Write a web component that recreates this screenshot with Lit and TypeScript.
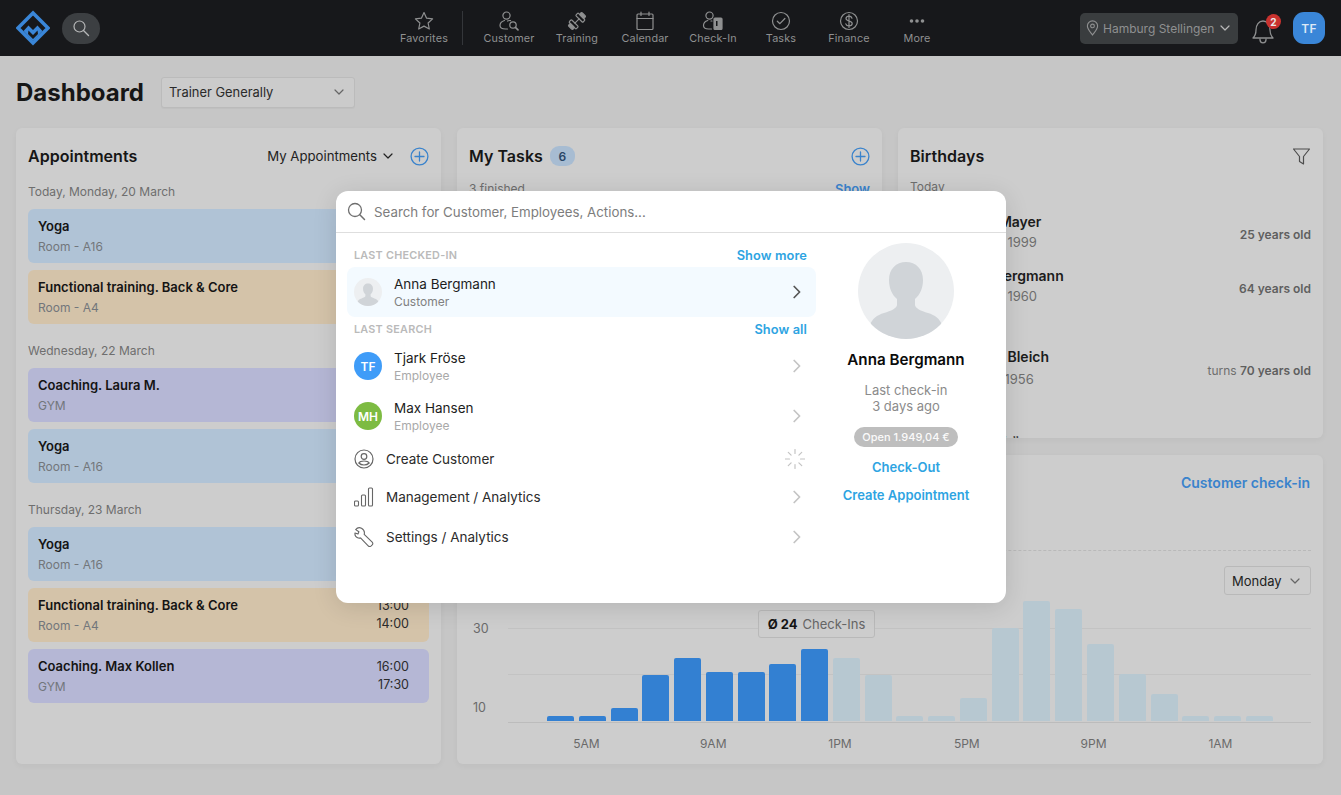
import { LitElement, html, css, svg } from "lit";
import { customElement } from "lit/decorators.js";

const chev = html`<svg class="chev" width="8" height="14" viewBox="0 0 8 14"><path d="M1.2 1.500 6.600 7l-5.400 5.500" fill="none" stroke="currentColor" stroke-width="1.700" stroke-linecap="round" stroke-linejoin="round"/></svg>`;
const down = html`<svg class="dchev" width="10" height="6" viewBox="0 0 10 6"><path d="M1 1l4 4 4-4" fill="none" stroke="currentColor" stroke-width="1.200" stroke-linecap="round" stroke-linejoin="round"/></svg>`;
const plus = html`<svg width="19" height="19" viewBox="0 0 19 19"><circle cx="9.500" cy="9.500" r="8.400" fill="none" stroke="#3a83cc" stroke-width="1.300"/><path d="M9.500 5v9M5 9.500h9" stroke="#3a83cc" stroke-width="1.300" stroke-linecap="round"/></svg>`;
const person = (bg: string, fg: string, s: number) => html`<svg width=${s} height=${s} viewBox="0 0 96 96"><defs><clipPath id="pc"><circle cx="48" cy="48" r="48"/></clipPath></defs><circle cx="48" cy="48" r="48" fill=${bg}/><g clip-path="url(#pc)"><path d="M48 19c-10 0-17 7-17 18 0 8 3 15 8 19v6c0 3-6 6-13 8-7 2-12 6-14 12v14h72V82c-2-6-7-10-14-12-7-2-13-5-13-8v-6c5-4 8-11 8-19 0-11-7-18-17-18z" fill=${fg}/></g></svg>`;

const navIcons: Record<string, unknown> = {
  star: svg`<path d="M11 2.600l2.600 5.600 6 .7-4.500 4.100 1.200 6L11 16.100 5.700 19l1.200-6L2.400 8.900l6-.7z"/>`,
  customer: svg`<circle cx="8.500" cy="5.600" r="3.600"/><path d="M6.500 10.500c-2.800.8-4.500 2.700-4.500 5 0 2.300 2 3.500 5.500 3.500h2"/><path d="M9.500 11c1-.5 2-.6 3-.4"/><circle cx="15" cy="15" r="3.200"/><path d="M17.400 17.400l2.600 2.400" stroke-width="1.700"/>`,
  training: svg`<g transform="rotate(-45 11 11)"><rect x="1.500" y="8" width="3" height="6" rx="1" fill="currentColor"/><rect x="4.500" y="6" width="3.500" height="10" rx="1"/><path d="M8 11h6"/><rect x="14" y="6" width="3.500" height="10" rx="1"/><rect x="17.500" y="8" width="3" height="6" rx="1" fill="currentColor"/></g>`,
  calendar: svg`<rect x="3" y="4" width="16" height="15.500" rx="1"/><path d="M3 8.500h16M7 2v3.500M15 2v3.500"/>`,
  checkin: svg`<circle cx="7.500" cy="5.600" r="3.600"/><path d="M5.800 10.500C3 11.300 1.500 13.200 1.500 15.500c0 2.500 2 3.500 5 3.500h3M9 11h1"/><rect x="12" y="8" width="8" height="11.500" rx="1" fill="currentColor"/><rect x="14" y="11" width="1.500" height="5" fill="#17181b" stroke="none"/>`,
  tasks: svg`<circle cx="11" cy="11" r="8.500"/><path d="M7.300 11.200l2.600 2.500 5-5.200"/>`,
  finance: svg`<circle cx="11" cy="11" r="8.500"/><path d="M14 8.200c-.4-1.300-1.600-2-3-2-1.700 0-3 .9-3 2.400 0 3.400 6.200 1.600 6.200 4.900 0 1.500-1.400 2.400-3.200 2.400-1.500 0-2.800-.7-3.200-2.100M11 4.500v13"/>`,
  more: svg`<circle cx="5.500" cy="11" r="1.800" fill="currentColor" stroke="none"/><circle cx="11" cy="11" r="1.800" fill="currentColor" stroke="none"/><circle cx="16.500" cy="11" r="1.800" fill="currentColor" stroke="none"/>`,
};

const nav = [
  ["star", "Favorites"], ["customer", "Customer"], ["training", "Training"], ["calendar", "Calendar"],
  ["checkin", "Check-In"], ["tasks", "Tasks"], ["finance", "Finance"], ["more", "More"],
];

type Appt = { t: string; s: string; c: string; a: string; b: string };
const days: { d: string; items: Appt[] }[] = [
  { d: "Today, Monday, 20 March", items: [
    { t: "Yoga", s: "Room - A16", c: "blue", a: "09:00", b: "10:00" },
    { t: "Functional training. Back & Core", s: "Room - A4", c: "orange", a: "13:00", b: "14:00" },
  ] },
  { d: "Wednesday, 22 March", items: [
    { t: "Coaching. Laura M.", s: "GYM", c: "purple", a: "11:00", b: "12:00" },
    { t: "Yoga", s: "Room - A16", c: "blue", a: "15:00", b: "16:00" },
  ] },
  { d: "Thursday, 23 March", items: [
    { t: "Yoga", s: "Room - A16", c: "blue", a: "09:00", b: "10:00" },
    { t: "Functional training. Back & Core", s: "Room - A4", c: "orange", a: "13:00", b: "14:00" },
    { t: "Coaching. Max Kollen", s: "GYM", c: "purple", a: "16:00", b: "17:30" },
  ] },
];

const tops = [716, 716, 708, 675, 658, 672, 672, 664, 649, 658, 675, 716, 716, 698, 628, 601, 609, 644, 674, 694, 716, 716, 716];
const ticks = ["5AM", "9AM", "1PM", "5PM", "9PM", "1AM"];

@customElement("app-root")
export class AppRoot extends LitElement {
  static styles = css`
    :host { display: block; height: 795px; position: relative; overflow: hidden; background: #c6c6c6; font-family: Inter, "Liberation Sans", sans-serif; color: #161616; font-size: 14px; }
    * { box-sizing: border-box; }
    .top { height: 56px; background: #17181b; display: flex; align-items: center; color: #8f9091; }
    .left { flex: 0 0 390px; display: flex; align-items: center; padding-left: 16px; gap: 12px; }
    .logo { display: block; }
    .spill { width: 38px; height: 31px; border-radius: 16px; background: #3c3f42; display: flex; align-items: center; justify-content: center; color: #b5b6b7; }
    .menu { display: flex; align-items: center; }
    .nitem { width: 68px; display: flex; flex-direction: column; align-items: center; font-size: 10.800px; letter-spacing: .15px; line-height: 14px; height: 40px; padding-top: 1px; margin-top: 1px; }
    .nitem svg { display: block; flex: none; fill: none; stroke: currentColor; stroke-width: 1.200; stroke-linejoin: round; stroke-linecap: round; }
    .sep { width: 1px; height: 34px; background: #34363a; margin: 0 12px 0 4px; }
    .right { margin-left: auto; display: flex; align-items: center; padding-right: 16px; }
    .loc { width: 158px; height: 31px; background: #3a3d3f; border-radius: 5px; display: flex; align-items: center; padding: 0 8px 0 6px; font-size: 12px; gap: 4px; color: #8f9091; white-space: nowrap; }
    .loc svg { flex: none; }
    .loc .dn { margin-left: auto; color: #b8b8b8; display: flex; }
    .bell { margin-left: 12px; width: 26px; height: 32px; position: relative; display: flex; align-items: flex-end; color: #8e8f90; }
    .bell svg { flex: none; }
    .badge { position: absolute; left: 16px; top: 2px; width: 15px; height: 15px; border-radius: 50%; background: #c9322f; color: #e9e9e9; font-size: 10px; font-weight: 700; display: flex; align-items: center; justify-content: center; }
    .av { margin-left: 17px; width: 32px; height: 32px; border-radius: 11px; background: #3a86d8; color: #dce9f6; font-size: 12px; font-weight: 600; display: flex; align-items: center; justify-content: center; letter-spacing: .3px; }
    .main { padding: 0 18px 0 16px; }
    .head { height: 72px; display: flex; align-items: center; gap: 17px; }
    h1 { margin: 2px 0 0; font-size: 24px; font-weight: 700; line-height: 30px; }
    .sel { width: 194px; height: 31px; border: 1px solid #bbbbbb; border-radius: 3px; background: #cbcbcb; padding: 0 10px 0 7px; display: flex; align-items: center; justify-content: space-between; font-size: 12.900px; color: #2a2a2a; box-shadow: 0 1px 1px rgba(0,0,0,.03); }
    .sel .dchev, .mon .dchev { color: #666; }
    .grid { display: grid; grid-template-columns: 425px 425px 425px; grid-template-rows: 310px 309px; gap: 17px 16px; }
    .card { background: #cdcdcd; border-radius: 6px; box-shadow: 0 2px 6px rgba(0,0,0,.04); padding: 0 12px; overflow: hidden; }
    .appts { grid-row: 1 / 3; }
    .chd { height: 56px; display: flex; align-items: center; justify-content: space-between; }
    h2 { margin: 0; font-size: 16px; font-weight: 600; display: flex; align-items: center; gap: 7px; letter-spacing: .03px; }
    .cnt { font-size: 12px; font-weight: 600; background: #a7bcd2; color: #2a4666; border-radius: 9px; min-width: 25px; height: 20px; display: flex; align-items: center; justify-content: center; }
    .ctl { display: flex; align-items: center; font-size: 13.200px; gap: 6px; color: #222; }
    .ctl svg:last-child { margin-left: 11px; }
    .day { font-size: 12px; color: #6e6e6e; line-height: 16px; height: 16px; margin-bottom: 9px; }
    .daygrp { margin-bottom: 19px; }
    .ap { height: 54px; border-radius: 6px; margin-bottom: 7px; padding: 0 20px 0 10px; display: flex; align-items: center; justify-content: space-between; }
    .ap .t { font-size: 13px; font-weight: 600; line-height: 17px; color: #141414; margin-bottom: 4px; }
    .ap .s { font-size: 12px; line-height: 16px; color: #72767b; }
    .ap .tm { font-size: 12.500px; line-height: 18px; color: #2b2b2b; text-align: right; }
    .blue { background: #b0c3d6; }
    .orange { background: #d4c3a9; }
    .purple { background: #b5b7d5; }
    .tasksub { display: flex; justify-content: space-between; font-size: 12px; color: #6e6e6e; margin-top: -3px; }
    .tasksub b { color: #3a83cc; font-weight: 600; font-size: 13px; }
    .bday .lbl { font-size: 12px; color: #6e6e6e; height: 28px; margin-top: -7px; line-height: 16px; padding-top: 2px; }
    .bday .lbl.next { height: 28px; margin-top: 0; padding-top: 6px; }
    .bday .lbl.last { height: 30px; }
    .br { height: 54px; display: flex; align-items: center; gap: 10px; }
    .br .ph { width: 40px; height: 40px; border-radius: 50%; background: #b5b5b5; flex: none; }
    .br .n { font-size: 14px; font-weight: 600; line-height: 18px; color: #1c1c1c; margin-top: 1px; }
    .br .d { font-size: 13px; line-height: 20px; color: #6e6e6e; margin-top: 1px; }
    .br .d.far { margin-top: 3px; }
    .br .age { margin-left: auto; font-size: 12px; color: #6e6e6e; padding-top: 4px; }
    .br .age b { font-weight: 600; color: #5f5f5f; }
    .chart { grid-column: 2 / 4; }
    .link { color: #3a83cc; font-weight: 600; font-size: 14px; margin-right: 1px; }
    .chd2 { height: 54px; display: flex; align-items: center; justify-content: space-between; }
    .dash { margin-top: 41px; border-top: 1px dashed #b9b9b9; }
    .rowm { display: flex; justify-content: flex-end; margin-top: 15px; }
    .mon { width: 87px; height: 29px; border: 1px solid #b9b9b9; border-radius: 3px; display: flex; align-items: center; justify-content: space-between; padding: 0 10px 0 7px; font-size: 13px; color: #222; }
    .plot { position: relative; height: 127px; margin-left: 39px; }
    .gl { position: absolute; left: 0; right: 0; height: 1px; background: #c3c3c3; }
    .g1 { top: 33px; } .g2 { top: 79px; } .g3 { top: 127px; background: #bcbcbc; }
    .bars { position: absolute; left: 39px; bottom: 1px; display: flex; align-items: flex-end; gap: 4.770px; }
    .bar { width: 27px; border-radius: 2px 2px 0 0; background: #b7c8d1; }
    .bar.on { background: #3380d2; }
    .yl { position: absolute; font-size: 12.500px; color: #6a6a6a; left: -35px; line-height: 16px; }
    .y30 { top: 26px; } .y10 { top: 105px; }
    .tip { position: absolute; left: 250px; top: 15px; width: 117px; height: 28px; border: 1px solid #b9b9b9; border-radius: 3px; background: #cdcdcd; display: flex; align-items: center; justify-content: center; gap: 5px; font-size: 13px; color: #666; }
    .tip b { color: #151515; font-weight: 700; }
    .xl { position: relative; height: 30px; margin-left: 39px; font-size: 12px; color: #6a6a6a; display: flex; padding: 14px 0 0 15px; }
    .xl span { width: 126.800px; text-align: center; flex: none; line-height: 16px; }
    .modal { position: absolute; left: 336px; top: 191px; width: 670px; height: 412px; border-radius: 12px; background: #fff; box-shadow: 0 4px 24px rgba(0,0,0,.12); overflow: hidden; }
    .sb { height: 42px; border-bottom: 1px solid #dedede; display: flex; align-items: center; padding-left: 11px; gap: 8px; color: #7d7d7d; font-size: 13.300px; }
    .sb svg { flex: none; }
    .cols { display: flex; }
    .lc { width: 480px; padding: 10px 0 0 11px; }
    .rc { width: 180px; display: flex; flex-direction: column; align-items: center; padding-top: 10px; }
    .sh { height: 24px; display: flex; align-items: center; justify-content: space-between; padding: 0 9px 0 7px; font-size: 10.800px; font-weight: 600; color: #bababa; letter-spacing: .25px; }
    .sh a { font-size: 12.800px; font-weight: 600; color: #2ea4e2; letter-spacing: .1px; }
    .pr { height: 50px; border-radius: 8px; display: flex; align-items: center; padding: 0 15px 0 7px; color: #c4c4c4; }
    .pr.hl { background: #f3faff; color: #555; }
    .ava { width: 28px; height: 28px; border-radius: 50%; color: #fff; font-size: 12px; font-weight: 600; display: flex; align-items: center; justify-content: center; flex: none; margin-right: 12px; }
    .tf { background: #3f9cf8; } .mh { background: #7dbb42; }
    .hlav { display: block; flex: none; margin-right: 12px; height: 28px; }
    .nm { font-size: 13.500px; line-height: 18px; color: #1d1d1d; }
    .sub { font-size: 12px; line-height: 15px; margin-top: 1px; color: #a9a9a9; }
    .pr.hl .sub { color: #808080; }
    .pr .chev, .ar .chev { margin-left: auto; flex: none; }
    .ar { display: flex; align-items: center; padding: 0 15px 0 7px; font-size: 13.500px; color: #2b2b2b; gap: 12px; }
    .ar > svg { flex: none; }
    .ar .chev { color: #c4c4c4; }
    .ar.a1 { height: 38px; margin-top: -1px; } .ar.a2 { height: 38px; } .ar.a3 { height: 42px; }
    .ar .spin { margin-left: auto; margin-right: -4px; display: block; }
    .big { display: block; height: 96px; }
    .rn { font-size: 15.200px; font-weight: 600; color: #0b0b0b; margin-top: 11px; line-height: 20px; }
    .lci { font-size: 13px; line-height: 16px; color: #8b8b8b; text-align: center; margin-top: 12px; }
    .open { margin-top: 13px; height: 20px; width: 104px; border-radius: 10px; background: #bebebe; color: #fafafa; font-size: 11px; font-weight: 500; display: flex; align-items: center; justify-content: center; }
    .ra { color: #2ea4e2; font-weight: 600; font-size: 13px; line-height: 16px; }
    .ra.r1 { margin-top: 12px; } .ra.r2 { margin-top: 12px; }
  `;

  render() {
    return html`
      <div class="top">
        <div class="left">
          <svg class="logo" width="34" height="36" viewBox="0 0 34 36">
            <path d="M17 3 32 18 17 33 2 18z" fill="none" stroke="#3a86d8" stroke-width="3.600" stroke-linejoin="miter"/>
            <path d="M7.500 21 12.500 15.500 17 20 21.500 15.500 26.500 21 17 31z" fill="#3a86d8"/>
            <path d="M12.500 20.500 17 25 21.500 20.500 22 24 17 29 12 24z" fill="#17181b"/>
          </svg>
          <div class="spill"><svg width="18" height="18" viewBox="0 0 18 18"><circle cx="7.500" cy="7.500" r="5.500" fill="none" stroke="currentColor" stroke-width="1.200"/><path d="M11.500 11.500l5 5" stroke="currentColor" stroke-width="1.400" stroke-linecap="round"/></svg></div>
        </div>
        <div class="menu">
          ${nav.map(([ic, l], i) => html`
            <div class="nitem"><svg width="22" height="22" viewBox="0 0 22 22">${navIcons[ic]}</svg>${l}</div>
            ${i === 0 ? html`<div class="sep"></div>` : ""}
          `)}
        </div>
        <div class="right">
          <div class="loc">
            <svg width="13" height="18" viewBox="0 0 14 18" fill="none" stroke="currentColor" stroke-width="1.200"><path d="M7 16.500C4 12.500 1.500 10 1.500 6.800a5.500 5.500 0 0 1 11 0c0 3.200-2.500 5.700-5.500 9.700z"/><circle cx="7" cy="6.800" r="2"/></svg>
            Hamburg Stellingen
            <span class="dn">${down}</span>
          </div>
          <div class="bell">
            <svg width="26" height="30" viewBox="0 0 26 30" fill="none" stroke="currentColor" stroke-width="1.300" stroke-linejoin="round"><path d="M3 24c2-2 3-3.800 3-8 0-5 2.800-9 7-9s7 4 7 9c0 4.200 1 6 3 8z"/><path d="M10 24.500v1.300a3 3 0 0 0 6 0v-1.300"/></svg>
            <span class="badge">2</span>
          </div>
          <div class="av">TF</div>
        </div>
      </div>
      <div class="main">
        <div class="head">
          <h1>Dashboard</h1>
          <div class="sel">Trainer Generally ${down}</div>
        </div>
        <div class="grid">
          <section class="card appts">
            <div class="chd"><h2>Appointments</h2><div class="ctl">My Appointments ${down} ${plus}</div></div>
            ${days.map((d) => html`
              <div class="daygrp">
                <div class="day">${d.d}</div>
                ${d.items.map((a) => html`
                  <div class="ap ${a.c}">
                    <div><div class="t">${a.t}</div><div class="s">${a.s}</div></div>
                    <div class="tm">${a.a}<br />${a.b}</div>
                  </div>`)}
              </div>`)}
          </section>
          <section class="card">
            <div class="chd"><h2>My Tasks <span class="cnt">6</span></h2>${plus}</div>
            <div class="tasksub"><span>3 finished</span><b>Show</b></div>
          </section>
          <section class="card bday">
            <div class="chd"><h2>Birthdays</h2>
              <svg width="19" height="19" viewBox="0 0 19 19" fill="none" stroke="#4d4d4d" stroke-width="1.200" stroke-linejoin="round"><path d="M1.500 2h16l-6 7.500v7.500l-4-2.500V9.500z"/></svg>
            </div>
            <div class="lbl">Today</div>
            <div class="br"><span class="ph"></span><div><div class="n">Anna Mayer</div><div class="d">20 Mar 1999</div></div><div class="age"><b>25 years old</b></div></div>
            <div class="br"><span class="ph"></span><div><div class="n">Nina Bergmann</div><div class="d">20 Mar 1960</div></div><div class="age"><b>64 years old</b></div></div>
            <div class="lbl next">Tomorrow</div>
            <div class="br"><span class="ph"></span><div><div class="n">Martin Bleich</div><div class="d far">21 Mar 1956</div></div><div class="age">turns <b>70 years old</b></div></div>
            <div class="lbl next last">Wednesday</div>
            <div class="br"><span class="ph"></span><div><div class="n">Tjark Fröse</div><div class="d">22 Mar 1980</div></div></div>
          </section>
          <section class="card chart">
            <div class="chd2"><h2>Check-Ins</h2><span class="link">Customer check-in</span></div>
            <div class="dash"></div>
            <div class="rowm"><div class="mon">Monday ${down}</div></div>
            <div class="plot">
              <div class="gl g1"></div><div class="gl g2"></div><div class="gl g3"></div>
              <span class="yl y30">30</span><span class="yl y10">10</span>
              <div class="bars">
                ${tops.map((t, i) => html`<div class="bar ${i < 9 ? "on" : ""}" style="height:${721 - t}px"></div>`)}
              </div>
              <div class="tip"><b>Ø 24</b> Check-Ins</div>
            </div>
            <div class="xl">${ticks.map((t) => html`<span>${t}</span>`)}</div>
          </section>
        </div>
      </div>

      <div class="modal">
        <div class="sb">
          <svg width="19" height="19" viewBox="0 0 19 19"><circle cx="8" cy="8" r="6.500" fill="none" stroke="#6f6f6f" stroke-width="1.300"/><path d="M12.800 12.800 17.500 17.500" stroke="#6f6f6f" stroke-width="1.500" stroke-linecap="round"/></svg>
          Search for Customer, Employees, Actions...
        </div>
        <div class="cols">
          <div class="lc">
            <div class="sh">LAST CHECKED-IN <a>Show more</a></div>
            <div class="pr hl">
              <span class="hlav">${person("#edeff1", "#d0d4d8", 28)}</span>
              <div><div class="nm">Anna Bergmann</div><div class="sub">Customer</div></div>
              ${chev}
            </div>
            <div class="sh">LAST SEARCH <a>Show all</a></div>
            <div class="pr"><span class="ava tf">TF</span><div><div class="nm">Tjark Fröse</div><div class="sub">Employee</div></div>${chev}</div>
            <div class="pr"><span class="ava mh">MH</span><div><div class="nm">Max Hansen</div><div class="sub">Employee</div></div>${chev}</div>
            <div class="ar a1">
              <svg width="20" height="20" viewBox="0 0 20 20" fill="none" stroke="#666" stroke-width="1.200"><circle cx="10" cy="10" r="9"/><circle cx="10" cy="7.500" r="2.800"/><path d="M4.800 14c.8-1.300 2.800-2 5.200-2s4.400.7 5.200 2c-1.300 1.300-3.100 2-5.200 2s-3.900-.7-5.200-2z"/></svg>
              Create Customer
              <svg class="spin" width="20" height="20" viewBox="0 0 20 20" stroke="#c4c4c4" stroke-width="1.200" stroke-linecap="round"><path d="M10 .5v4M10 15.500v4M.5 10h4M15.500 10h4M3.300 3.300l2.800 2.800M13.900 13.900l2.800 2.800M3.300 16.700l2.800-2.800M13.900 6.100l2.800-2.800"/></svg>
            </div>
            <div class="ar a2">
              <svg width="20" height="20" viewBox="0 0 20 20" fill="none" stroke="#666" stroke-width="1.100"><rect x=".5" y="14" width="4" height="5" rx="1"/><rect x="7.500" y="8" width="4" height="11" rx="1"/><rect x="14.500" y="1" width="4" height="18" rx="1"/></svg>
              Management / Analytics ${chev}
            </div>
            <div class="ar a3">
              <svg width="20" height="20" viewBox="0 0 20 20" fill="none" stroke="#666" stroke-width="1.100" stroke-linejoin="round"><path d="M7.500 1.200C5.500.3 3 .9 1.700 2.600l3.200 2.200L4 7 1 6c-.3 2 .7 4 2.600 4.800 1 .4 2 .4 2.900.1l7.700 8c.7.700 2 .8 3 0l1-1c.7-.8.700-2 0-2.800l-8-7.700c.6-2.300-.4-4.900-2.700-6.200z"/></svg>
              Settings / Analytics ${chev}
            </div>
          </div>
          <div class="rc">
            <span class="big">${person("#edeff1", "#d0d4d8", 96)}</span>
            <div class="rn">Anna Bergmann</div>
            <div class="lci">Last check-in<br />3 days ago</div>
            <div class="open">Open 1.949,04 €</div>
            <div class="ra r1">Check-Out</div>
            <div class="ra r2">Create Appointment</div>
          </div>
        </div>
      </div>
    `;
  }
}
